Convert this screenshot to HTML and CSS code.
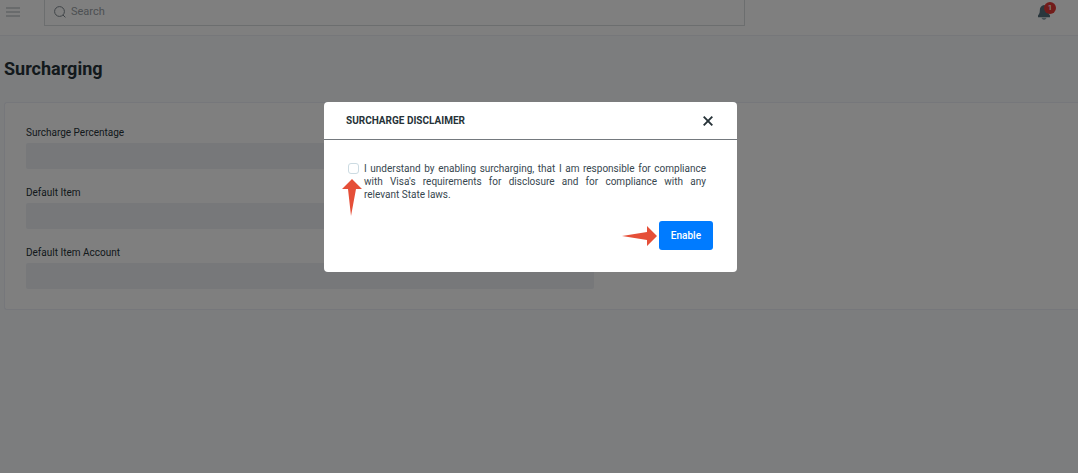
FILE: index.html
```html
<!DOCTYPE html>
<html lang="en">
<head>
<meta charset="utf-8">
<title>Surcharging</title>
<link rel="stylesheet" href="styles.css">
</head>
<body>
<header class="topbar">
  <button class="menu-button" type="button" aria-label="Menu">
    <svg width="14" height="10" viewBox="0 0 14 10"><path d="M0 1h14M0 5h14M0 9h14" stroke="#c3c9cc" stroke-width="1.300"/></svg>
  </button>
  <label class="search">
    <svg width="12" height="12" viewBox="0 0 12 12" fill="none" stroke="#7d878e" stroke-width="1"><circle cx="5.5" cy="5.5" r="4.9"/><path d="M9 9l2.4 2.4"/></svg>
    <input class="search-input" type="text" placeholder="Search" aria-label="Search">
  </label>
  <button class="bell" type="button" aria-label="Notifications">
    <svg width="12" height="15" viewBox="0 0 12 15"><path d="M6 0C3 .6 1.800 2.600 1.800 5.500C1.800 8.500 1 9 0 10.500v1.700h12v-1.700C11 9 10.200 8.500 10.200 5.500C10.200 2.600 9 .6 6 0z" fill="#546e7a"/><path d="M3.500 12.800h5C8 14.200 7 14.800 6 14.800S4 14.200 3.500 12.800z" fill="#90a4ae"/></svg>
    <span class="badge">1</span>
  </button>
</header>
<main class="page">
  <h1 class="title">Surcharging</h1>
  <form class="card">
    <label class="label" for="percentage">Surcharge Percentage</label>
    <input class="field" id="percentage" type="text" disabled>
    <label class="label" for="item">Default Item</label>
    <input class="field" id="item" type="text" disabled>
    <label class="label" for="account">Default Item Account</label>
    <input class="field" id="account" type="text" disabled>
  </form>
</main>
<div class="overlay">
  <section class="modal" role="dialog" aria-labelledby="modal-title">
    <div class="modal-head">
      <h2 class="modal-title" id="modal-title">SURCHARGE DISCLAIMER</h2>
      <button class="close" type="button" aria-label="Close">
        <svg width="10" height="10" viewBox="0 0 10 10"><path d="M.7 .7l8.600 8.600M9.300 .7L.7 9.300" stroke="#263238" stroke-width="1.900"/></svg>
      </button>
    </div>
    <div class="modal-body">
      <div class="consent">
        <input class="check" id="consent" type="checkbox">
        <label class="consent-text" for="consent">I understand by enabling surcharging, that I am responsible for compliance with Visa's requirements for disclosure and for compliance with any relevant&nbsp;State laws.</label>
        <svg class="arrow-up" width="20" height="37" viewBox="0 0 20 37"><path d="M10 0l10 10h-6l-5 27L6 10H0z" fill="#e54f38"/></svg>
      </div>
      <div class="actions">
        <svg class="arrow-right" width="35" height="20" viewBox="0 0 35 20"><path d="M35 10L25 0v6L0 10l25 4v6z" fill="#e54f38"/></svg>
        <button class="enable" type="button">Enable</button>
      </div>
    </div>
  </section>
</div>
</body>
</html>
```

FILE: styles.css
```css
* {
  box-sizing: border-box;
}

body {
  margin: 0;
  min-height: 100vh;
  background: #f8fafd;
  color: #263238;
  font-family: Roboto, sans-serif;
  font-size: 10px;
  line-height: 13px;
}

button {
  padding: 0;
  border: 0;
  background: none;
  font: inherit;
  cursor: pointer;
}

svg {
  display: block;
}

.topbar {
  display: flex;
  align-items: flex-start;
  padding: 0 21px 9px 6px;
  border-bottom: 1px solid #eceff4;
  background: #fff;
}

.menu-button {
  margin-top: 7px;
}

.search {
  display: flex;
  align-items: center;
  flex: 0 1 701px;
  gap: 5px;
  margin-left: 24px;
  padding: 0 9px 2px;
  border: 1px solid #d9dcdf;
  border-top: 0;
  font-size: 11px;
}

.search-input {
  flex: 1;
  height: 23px;
  padding: 0;
  border: 0;
  outline: 0;
  background: none;
  font: inherit;
}

.search-input::placeholder {
  color: #9aa1a6;
}

.bell {
  position: relative;
  margin: 5px 0 0 auto;
  padding-right: 7px;
}

.badge {
  position: absolute;
  top: -3px;
  right: 1px;
  width: 12px;
  height: 12px;
  border-radius: 50%;
  background: #e53935;
  color: #fff;
  font-size: 8px;
  font-weight: 500;
  line-height: 12px;
  text-align: center;
}

.page {
  padding: 22px 0 0 4px;
}

.title {
  margin: 0;
  font-size: 18px;
  font-weight: 700;
  line-height: 22px;
}

.card {
  margin-top: 22px;
  padding: 23px 0 20px 21px;
  border: 1px solid #eceff6;
  border-right: 0;
  border-radius: 3px 0 0 3px;
  background: #fff;
}

.label {
  display: block;
  margin-bottom: 4px;
}

.field {
  display: block;
  width: 54%;
  height: 26px;
  margin-bottom: 17px;
  border: 0;
  border-radius: 2px;
  background: #eef1f5;
  font: inherit;
}

.field:last-child {
  margin-bottom: 0;
}

.overlay {
  position: fixed;
  inset: 0;
  display: flex;
  align-items: flex-start;
  justify-content: center;
  padding: 102px 17px 0 0;
  background: rgba(0, 0, 0, 0.5);
}

.modal {
  width: 413px;
  border-radius: 4px;
  background: #fff;
}

.modal-head {
  display: flex;
  align-items: center;
  justify-content: space-between;
  padding: 12px 24px 12px 22px;
  border-bottom: 1px solid #74797e;
}

.modal-title {
  margin: 0;
  font-size: 10px;
  font-weight: 700;
  line-height: 13px;
}

.modal-body {
  padding: 22px 24px 22px 23px;
}

.consent {
  position: relative;
  display: flex;
  align-items: flex-start;
  gap: 5px;
  padding: 0 7px 0 1px;
}

.check {
  appearance: none;
  flex: none;
  width: 11px;
  height: 11px;
  margin: 1px 0 0;
  border: 1px solid #ccdbe2;
  border-radius: 3px;
}

.consent-text {
  color: #37474f;
  text-align: justify;
}

.arrow-up {
  position: absolute;
  top: 17px;
  left: -5px;
}

.actions {
  display: flex;
  align-items: center;
  justify-content: flex-end;
  gap: 2px;
  margin-top: 20px;
}

.enable {
  padding: 8px 12px;
  border-radius: 3px;
  background: #007bff;
  color: #fff;
  font-weight: 500;
}
```
